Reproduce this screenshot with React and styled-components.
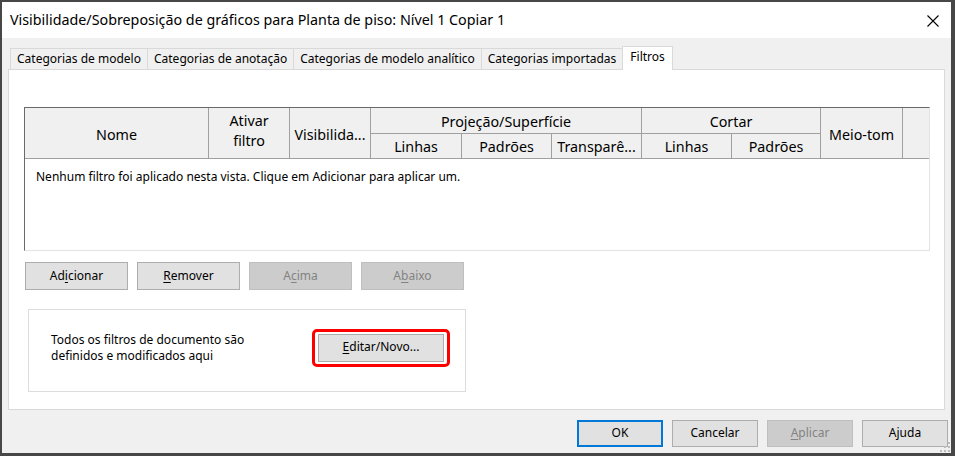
import React from "react";
import styled, { createGlobalStyle } from "styled-components";

const GlobalStyle = createGlobalStyle`
  html, body { margin: 0; padding: 0; }
  body {
    background: #474747;
    font-family: "Noto Sans", "Open Sans", sans-serif;
    color: #000;
    width: 955px;
    height: 456px;
    overflow: hidden;
  }
  * { box-sizing: border-box; }
`;

const Window = styled.div`
  position: relative;
  margin: 2px 0 0 2px;
  width: 949px;
  height: 451px;
  background: #f0f0f0;
  display: flex;
  flex-direction: column;
`;

const TitleBar = styled.div`
  height: 36px;
  background: #fff;
  display: flex;
  align-items: center;
  justify-content: space-between;
  padding: 0 12px 0 8px;
  flex-shrink: 0;
`;

const TitleText = styled.div`
  font-size: 14.3px;
  line-height: 20px;
  padding-bottom: 1px;
`;

const CloseButton = styled.div`
  width: 12px;
  height: 12px;
  display: flex;
  margin-top: 2px;
`;

const Body = styled.div`
  padding: 8px 6px 0 6px;
  display: flex;
  flex-direction: column;
`;

const TabStrip = styled.div`
  display: flex;
  align-items: flex-end;
  height: 24px;
  padding-left: 2px;
  margin-bottom: -1px;
  position: relative;
  z-index: 1;
`;

const Tab = styled.div`
  height: ${(p) => (p.$active ? "24px" : "22px")};
  padding: 0 ${(p) => (p.$active ? "7px" : "6px")};
  margin-left: -1px;
  border: 1px solid #d9d9d9;
  border-bottom: ${(p) => (p.$active ? "none" : "1px solid #d9d9d9")};
  background: ${(p) => (p.$active ? "#fff" : "#f0f0f0")};
  font-size: 12px;
  line-height: 20px;
  white-space: nowrap;
  &:first-child { margin-left: 0; }
`;

const Panel = styled.div`
  height: 341px;
  background: #fff;
  border: 1px solid #d9d9d9;
  padding: 37px 14px 0 15px;
  display: flex;
  flex-direction: column;
`;

const Table = styled.div`
  height: 144px;
  border: 1px solid #e3e3e3;
  border-top-color: #6a6a6a;
  border-left-color: #6a6a6a;
  display: flex;
  flex-direction: column;
`;

const HeaderGrid = styled.div`
  display: grid;
  grid-template-columns: 184px 81px 81px 91px 90px 90px 90px 89px 82px 1fr;
  grid-template-rows: 26px 25px;
  background: #f0f0f0;
`;

const HeadCell = styled.div`
  grid-column: ${(p) => p.$col || "auto"};
  grid-row: ${(p) => p.$row || "auto"};
  border-right: ${(p) => (p.$last ? "none" : "1px solid #a0a0a0")};
  border-bottom: 1px solid #a0a0a0;
  display: flex;
  align-items: center;
  justify-content: center;
  text-align: center;
  font-size: 14.3px;
  line-height: 20px;
  white-space: nowrap;
  overflow: hidden;
  padding-top: ${(p) => (p.$raise ? "0" : p.$span ? "4px" : "2px")};
  padding-bottom: ${(p) => (p.$raise ? "4px" : "0")};
`;

const TableBody = styled.div`
  flex: 1;
  background: #fff;
  padding: 10px 11px;
  font-size: 12px;
  line-height: 16px;
`;

const ButtonRow = styled.div`
  display: flex;
  gap: 9px;
  margin: 11px 0 0 1px;
`;

const Button = styled.div`
  width: ${(p) => p.$w || 103}px;
  height: ${(p) => p.$h || 28}px;
  display: flex;
  align-items: center;
  justify-content: center;
  font-size: 12px;
  line-height: 16px;
  padding-bottom: 1px;
  background: ${(p) => (p.$disabled ? "#cccccc" : "#e1e1e1")};
  border: ${(p) =>
    p.$default ? "2px solid #0078d7" : p.$disabled ? "1px solid #bfbfbf" : "1px solid #adadad"};
  color: ${(p) => (p.$disabled ? "#838383" : "#000")};
  white-space: nowrap;
`;

const Key = styled.span`
  text-decoration: underline;
  text-underline-offset: 2px;
  text-decoration-thickness: 1px;
`;

const GroupBox = styled.div`
  margin: 19px 0 0 4px;
  width: 438px;
  height: 83px;
  border: 1px solid #dcdcdc;
  display: flex;
  align-items: center;
  padding: 0 15px 6px 22px;
`;

const GroupText = styled.div`
  font-size: 12px;
  line-height: 16px;
`;

const Highlight = styled.div`
  margin-left: auto;
  border: 3px solid #ff0000;
  border-radius: 5px;
  padding: 2px 3px;
  display: flex;
`;

const Footer = styled.div`
  display: flex;
  justify-content: flex-end;
  gap: 9px;
  padding: 10px 3px 0 0;
`;

const Grip = styled.svg`
  position: absolute;
  right: 0;
  bottom: 0;
`;

export default function App() {
  return (
    <>
      <GlobalStyle />
      <Window>
        <TitleBar>
          <TitleText>
            Visibilidade/Sobreposição de gráficos para Planta de piso: Nível 1 Copiar 1
          </TitleText>
          <CloseButton>
            <svg width="12" height="12" viewBox="0 0 12 12">
              <path d="M0.5 0.5 L11.5 11.5 M11.5 0.5 L0.5 11.5" stroke="#000" strokeWidth="1.1" />
            </svg>
          </CloseButton>
        </TitleBar>
        <Body>
          <TabStrip>
            <Tab>Categorias de modelo</Tab>
            <Tab>Categorias de anotação</Tab>
            <Tab>Categorias de modelo analítico</Tab>
            <Tab>Categorias importadas</Tab>
            <Tab $active>Filtros</Tab>
          </TabStrip>
          <Panel>
            <Table>
              <HeaderGrid>
                <HeadCell $col="1" $row="1 / span 2" $span>Nome</HeadCell>
                <HeadCell $col="2" $row="1 / span 2" $raise>
                  Ativar
                  <br />
                  filtro
                </HeadCell>
                <HeadCell $col="3" $row="1 / span 2" $span>Visibilida...</HeadCell>
                <HeadCell $col="4 / span 3" $row="1">Projeção/Superfície</HeadCell>
                <HeadCell $col="7 / span 2" $row="1">Cortar</HeadCell>
                <HeadCell $col="9" $row="1 / span 2" $span>Meio-tom</HeadCell>
                <HeadCell $col="10" $row="1 / span 2" $last />
                <HeadCell $col="4" $row="2">Linhas</HeadCell>
                <HeadCell $col="5" $row="2">Padrões</HeadCell>
                <HeadCell $col="6" $row="2">Transparê...</HeadCell>
                <HeadCell $col="7" $row="2">Linhas</HeadCell>
                <HeadCell $col="8" $row="2">Padrões</HeadCell>
              </HeaderGrid>
              <TableBody>
                Nenhum filtro foi aplicado nesta vista. Clique em Adicionar para aplicar um.
              </TableBody>
            </Table>
            <ButtonRow>
              <Button>
                Ad<Key>i</Key>cionar
              </Button>
              <Button>
                <Key>R</Key>emover
              </Button>
              <Button $disabled>
                A<Key>c</Key>ima
              </Button>
              <Button $disabled>
                A<Key>b</Key>aixo
              </Button>
            </ButtonRow>
            <GroupBox>
              <GroupText>
                Todos os filtros de documento são
                <br />
                definidos e modificados aqui
              </GroupText>
              <Highlight>
                <Button $w={126}>
                  <Key>E</Key>ditar/Novo...
                </Button>
              </Highlight>
            </GroupBox>
          </Panel>
        </Body>
        <Footer>
          <Button $w={86} $h={27} $default>
            OK
          </Button>
          <Button $w={86} $h={27}>
            Cancelar
          </Button>
          <Button $w={86} $h={27} $disabled>
            <Key>A</Key>plicar
          </Button>
          <Button $w={86} $h={27}>
            Ajuda
          </Button>
        </Footer>
        <Grip width="11" height="11" viewBox="0 0 11 11">
          <g fill="#bcbcbc">
            <rect x="8" y="0" width="2" height="2" />
            <rect x="4" y="4" width="2" height="2" />
            <rect x="8" y="4" width="2" height="2" />
            <rect x="0" y="8" width="2" height="2" />
            <rect x="4" y="8" width="2" height="2" />
            <rect x="8" y="8" width="2" height="2" />
          </g>
        </Grip>
      </Window>
    </>
  );
}
